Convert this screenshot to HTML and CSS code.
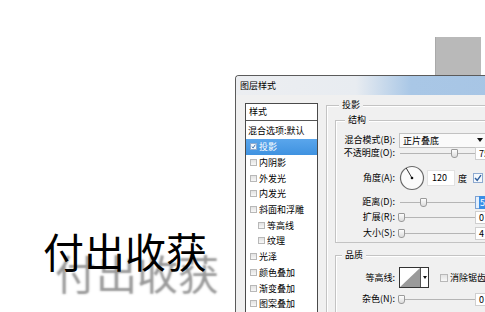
FILE: index.html
```html
<!DOCTYPE html>
<html lang="zh-CN">
<head>
<meta charset="utf-8">
<title>图层样式</title>
<link rel="stylesheet" href="styles.css">
</head>
<body>
<div class="stage">
  <div class="caption">付出收获</div>
  <div class="right">
    <div class="gray-box"></div>
    <div class="dialog">
      <div class="titlebar">图层样式</div>
      <div class="dlg-body">
        <div class="list">
          <div class="list-head">样式</div>
          <div class="row first">混合选项:默认</div>
          <div class="row sel"><span class="cb on"><svg width="7" height="7" viewBox="0 0 7 7"><path d="M1 3.5 L3 5.5 L6 1" fill="none" stroke="#3a6fb0" stroke-width="1.4"/></svg></span>投影</div>
          <div class="row"><span class="cb"></span>内阴影</div>
          <div class="row"><span class="cb"></span>外发光</div>
          <div class="row"><span class="cb"></span>内发光</div>
          <div class="row"><span class="cb"></span>斜面和浮雕</div>
          <div class="row sub"><span class="cb"></span>等高线</div>
          <div class="row sub"><span class="cb"></span>纹理</div>
          <div class="row"><span class="cb"></span>光泽</div>
          <div class="row"><span class="cb"></span>颜色叠加</div>
          <div class="row"><span class="cb"></span>渐变叠加</div>
          <div class="row"><span class="cb"></span>图案叠加</div>
        </div>
        <div class="panel">
          <div class="group outer">
            <div class="gtitle t-outer">投影</div>
            <div class="group inner struct">
              <div class="gtitle t-struct">结构</div>
              <div class="form form-struct">
                <div class="lbl">混合模式(B):</div>
                <div class="ctl"><div class="select"><span>正片叠底</span><svg class="arrow" width="6" height="4" viewBox="0 0 6 4"><path d="M0 0 H6 L3 4 Z" fill="#111"/></svg></div></div>

                <div class="lbl">不透明度(O):</div>
                <div class="ctl"><div class="slider"><span class="thumb" style="left:51px"></span></div><div class="val">75</div></div>

                <div class="lbl">角度(A):</div>
                <div class="ctl">
                  <svg class="dial" width="26" height="26" viewBox="0 0 26 26"><circle cx="13" cy="13" r="11.5" fill="#fbfbfb" stroke="#6a6a6a" stroke-width="1.2"/><line x1="13" y1="13" x2="7.2" y2="3" stroke="#333" stroke-width="1"/><circle cx="13" cy="13" r="1.3" fill="#111"/></svg>
                  <div class="num">120</div>
                  <span class="unit">度</span>
                  <span class="cb big on"><svg width="8" height="8" viewBox="0 0 8 8"><path d="M1 4 L3.2 6.3 L7 1.2" fill="none" stroke="#2f5f9e" stroke-width="1.4"/></svg></span>
                </div>

                <div class="lbl">距离(D):</div>
                <div class="ctl"><div class="slider"><span class="thumb" style="left:20px"></span></div><div class="val active"><span class="hl">5</span></div></div>

                <div class="lbl">扩展(R):</div>
                <div class="ctl"><div class="slider"><span class="thumb" style="left:-2px"></span></div><div class="val">0</div></div>

                <div class="lbl">大小(S):</div>
                <div class="ctl"><div class="slider"><span class="thumb" style="left:-2px"></span></div><div class="val">4</div></div>
              </div>
            </div>
            <div class="group inner quality">
              <div class="gtitle t-quality">品质</div>
              <div class="form form-quality">
                <div class="lbl">等高线:</div>
                <div class="ctl">
                  <div class="contour">
                    <svg width="20" height="19" viewBox="0 0 20 19"><rect width="20" height="19" fill="#fff"/><path d="M0 19 L20 0 L20 19 Z" fill="#9a9a9a"/></svg>
                    <div class="contour-dd"><svg width="4" height="3" viewBox="0 0 4 3"><path d="M0 0 H4 L2 3 Z" fill="#111"/></svg></div>
                  </div>
                  <span class="cb aa"></span>
                  <span class="aa-text">消除锯齿</span>
                </div>

                <div class="lbl">杂色(N):</div>
                <div class="ctl"><div class="slider"><span class="thumb" style="left:-2px"></span></div><div class="val">0</div></div>
              </div>
            </div>
          </div>
        </div>
      </div>
    </div>
  </div>
</div>
</body>
</html>
```

FILE: styles.css
```css
* { box-sizing: border-box; }
html, body { margin: 0; padding: 0; }
body {
  width: 485px;
  height: 312px;
  overflow: hidden;
  background: #fff;
  font-family: "Noto Sans CJK SC", "Noto Sans", sans-serif;
  color: #000;
}
.stage {
  display: flex;
  width: 485px;
  height: 312px;
  overflow: hidden;
}
.caption {
  flex: none;
  width: 192px;
  margin: 230px 0 0 43px;
  font-size: 41px;
  line-height: 41px;
  white-space: nowrap;
  text-shadow: 12px 22px 2px rgba(70, 70, 70, 0.55);
}
.right {
  flex: none;
  width: 320px;
  display: flex;
  flex-direction: column;
}
.gray-box {
  margin: 37px 0 0 200px;
  width: 46px;
  height: 38px;
  background: #b9b9b9;
  border-left: 1px solid #a9a9a9;
}
.dialog {
  flex: 1;
  display: flex;
  flex-direction: column;
  border-left: 1px solid #5b5b5b;
  border-top: 1px solid #5b5b5b;
  border-radius: 4px 0 0 0;
  background: #f0f0f0;
  overflow: hidden;
}
.titlebar {
  height: 19px;
  line-height: 19px;
  padding-left: 4px;
  font-size: 9px;
  background: linear-gradient(to right, #eceef1 0, #e8ecf1 120px, #a9c7e6 175px, #a6c4e4 100%);
}
.dlg-body {
  flex: 1;
  display: flex;
  align-items: flex-start;
  padding: 8px 0 0 9px;
}
.list {
  flex: none;
  width: 73px;
  height: 230px;
  border: 1px solid #4a4a4a;
  background: #fff;
  font-size: 9px;
}
.list-head {
  height: 17px;
  line-height: 16px;
  padding-left: 3px;
  border-bottom: 1px solid #555;
}
.row {
  height: 15.7px;
  display: flex;
  align-items: center;
  padding-left: 4px;
  white-space: nowrap;
}
.row.first { height: 18px; padding-left: 2px; }
.row.sub { padding-left: 12px; }
.row.sel {
  background: linear-gradient(#5aa6ec, #3f92e0);
  color: #fff;
}
.cb {
  flex: none;
  width: 7px;
  height: 7px;
  margin-right: 2px;
  border: 1px solid #b8b8b8;
  background: linear-gradient(#e2e2e2, #f8f8f8);
  display: inline-flex;
  align-items: center;
  justify-content: center;
}
.cb svg { display: block; }
.cb.on { background: #f4f8fc; border-color: #8eaad0; }
.panel {
  flex: none;
  margin: 2px 0 0 8px;
  width: 230px;
  font-size: 9px;
}
.group {
  position: relative;
  border: 1px solid #c3c3c3;
  box-shadow: inset 1px 1px 0 #fff;
}
.gtitle {
  position: absolute;
  top: -7px;
  padding: 0 3px;
  line-height: 12px;
  background: #f0f0f0;
  white-space: nowrap;
}
.outer { height: 230px; padding: 14px 0 0 8px; }
.t-outer { left: 12px; }
.struct { width: 200px; padding: 11px 0 4px 0; }
.t-struct { left: 9px; }
.quality { width: 200px; margin-top: 12px; padding: 10px 0 4px 0; }
.t-quality { left: 6px; }
.form {
  display: grid;
  grid-template-columns: 59px 1fr;
  column-gap: 4px;
  align-items: center;
}
.form-struct { grid-template-rows: 16px 10px 40px 8px 22px 10px; }
.form-quality { grid-template-rows: 23px 20px; }
.lbl {
  text-align: right;
  white-space: nowrap;
  line-height: 12px;
}
.ctl {
  display: flex;
  align-items: center;
  white-space: nowrap;
}
.select {
  width: 88px;
  height: 15px;
  display: flex;
  align-items: center;
  padding: 0 3px;
  border: 1px solid #c2c2c2;
  background: #fafafa;
}
.select .arrow { margin-left: auto; }
.slider {
  position: relative;
  flex: none;
  width: 75px;
  height: 9px;
  margin-left: 1px;
  background: linear-gradient(#f0f0f0 0 4px, #b5b5b5 4px 5px, #f0f0f0 5px);
}
.thumb {
  position: absolute;
  top: 0;
  width: 7px;
  height: 9px;
  border: 1px solid #9a9a9a;
  border-radius: 1px 1px 3px 3px;
  background: linear-gradient(#fdfdfd, #dcdcdc);
}
.val {
  flex: none;
  width: 30px;
  height: 13px;
  line-height: 11px;
  margin-left: 0;
  padding-left: 3px;
  border: 1px solid #cfcfcf;
  background: #fff;
}
.val.active { border-color: #7ea3d3; background: #e6f0fb; }
.val .hl { background: #3a8ee6; color: #fff; padding: 0 1px; }
.dial { display: block; flex: none; }
.num {
  flex: none;
  width: 28px;
  height: 16px;
  line-height: 14px;
  margin-left: 2px;
  padding-left: 4px;
  background: #fff;
  border: 1px solid #e2e2e2;
}
.unit { margin-left: 3px; }
.cb.big { width: 10px; height: 10px; margin: 0 0 0 6px; }
.contour {
  flex: none;
  display: flex;
  height: 21px;
  border: 1px solid #333;
  background: #fff;
}
.contour svg { display: block; }
.contour-dd {
  width: 8px;
  border-left: 1px solid #555;
  display: flex;
  align-items: center;
  justify-content: center;
}
.cb.aa { width: 8px; height: 8px; margin: 0 2px 0 11px; }
.aa-text { }
```
